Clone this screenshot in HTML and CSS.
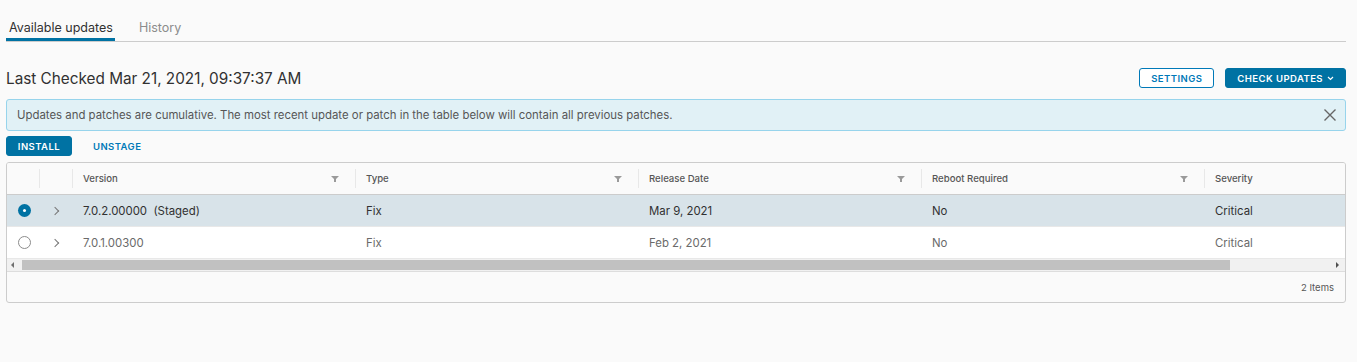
FILE: index.html
```html
<!DOCTYPE html>
<html lang="en">
<head>
    <meta charset="UTF-8">
    <meta name="viewport" content="width=device-width, initial-scale=1.0">
    <title>Updates</title>
    <link rel="stylesheet" href="styles.css">
</head>
<body>

<div class="tabs">
    <a class="tab active" href="#">Available updates</a>
    <a class="tab" href="#">History</a>
</div>

<div class="title-row">
    <h2>Last Checked Mar 21, 2021, 09:37:37 AM</h2>
    <div class="actions">
        <button class="btn btn-outline">SETTINGS</button>
        <button class="btn btn-primary">CHECK UPDATES
            <svg width="7" height="5" viewBox="0 0 7 5"><path d="M1 1l2.5 2.5L6 1" fill="none" stroke="#fff" stroke-width="1.2"/></svg>
        </button>
    </div>
</div>

<div class="alert">
    <span>Updates and patches are cumulative. The most recent update or patch in the table below will contain all previous patches.</span>
    <svg class="alert-close" width="14" height="14" viewBox="0 0 14 14"><path d="M1.5 1.5l11 11M12.5 1.5l-11 11" stroke="#666" stroke-width="1.4"/></svg>
</div>

<div class="toolbar">
    <button class="btn btn-primary">INSTALL</button>
    <button class="btn btn-link">UNSTAGE</button>
</div>

<div class="grid">
    <div class="grid-body">
        <div class="row head">
            <div class="cell c-sel"></div>
            <div class="cell c-exp"></div>
            <div class="cell c-col">Version <svg class="filter" width="8" height="6" viewBox="0 0 8 6"><path d="M0 0h8L5 3v3H3V3z" fill="#9a9a9a"/></svg></div>
            <div class="cell c-col">Type <svg class="filter" width="8" height="6" viewBox="0 0 8 6"><path d="M0 0h8L5 3v3H3V3z" fill="#9a9a9a"/></svg></div>
            <div class="cell c-col">Release Date <svg class="filter" width="8" height="6" viewBox="0 0 8 6"><path d="M0 0h8L5 3v3H3V3z" fill="#9a9a9a"/></svg></div>
            <div class="cell c-col">Reboot Required <svg class="filter" width="8" height="6" viewBox="0 0 8 6"><path d="M0 0h8L5 3v3H3V3z" fill="#9a9a9a"/></svg></div>
            <div class="cell c-last">Severity</div>
        </div>
        <div class="row selected">
            <div class="cell c-sel"><span class="radio on"></span></div>
            <div class="cell c-exp"><span class="caret"></span></div>
            <div class="cell c-col">7.0.2.00000&nbsp; (Staged)</div>
            <div class="cell c-col">Fix</div>
            <div class="cell c-col">Mar 9, 2021</div>
            <div class="cell c-col">No</div>
            <div class="cell c-last">Critical</div>
        </div>
        <div class="row">
            <div class="cell c-sel"><span class="radio"></span></div>
            <div class="cell c-exp"><span class="caret"></span></div>
            <div class="cell c-col">7.0.1.00300</div>
            <div class="cell c-col">Fix</div>
            <div class="cell c-col">Feb 2, 2021</div>
            <div class="cell c-col">No</div>
            <div class="cell c-last">Critical</div>
        </div>
    </div>
    <div class="hscroll">
        <span class="arrow left"></span>
        <div class="thumb"></div>
        <span class="arrow right"></span>
    </div>
    <div class="grid-footer">2 Items</div>
</div>

</body>
</html>
```

FILE: styles.css
```css
body {
    margin: 0;
    padding: 14px 11px 0 6px;
    background: #fafafa;
    font-family: Inter, "Noto Sans", sans-serif;
    color: #565656;
}
.tabs {
    display: flex;
    gap: 23px;
    border-bottom: 1px solid #ccc;
    height: 27px;
}
.tab {
    font-size: 12.5px;
    color: #8c8c8c;
    text-decoration: none;
    padding: 0 1px;
    line-height: 27px;
    box-sizing: border-box;
}
.tab.active {
    color: #313131;
    border-bottom: 3px solid #0072a3;
    padding: 0 2px 0 3px;
    height: 27px;
}
.title-row {
    display: flex;
    justify-content: space-between;
    align-items: center;
    margin-top: 26px;
}
.title-row h2 {
    margin: 0;
    font-weight: 400;
    font-size: 15.3px;
    color: #313131;
}
.actions {
    display: flex;
    gap: 11px;
}
.btn {
    font-family: inherit;
    font-size: 9.5px;
    font-weight: 600;
    letter-spacing: 0.45px;
    height: 20px;
    padding: 0 11px;
    border-radius: 3px;
    cursor: pointer;
    display: inline-flex;
    align-items: center;
    gap: 4px;
}
.btn-outline {
    background: #fff;
    border: 1px solid #0079b8;
    color: #0079b8;
    width: 75px;
    justify-content: center;
}
.btn-primary {
    background: #0072a3;
    border: 1px solid #0072a3;
    color: #fff;
}
.btn-link {
    background: none;
    border: none;
    color: #0079b8;
    padding: 0 10px;
}
.alert {
    margin-top: 11px;
    height: 32px;
    box-sizing: border-box;
    background: #e1f1f6;
    border: 1px solid #97d4ec;
    border-radius: 3px;
    display: flex;
    align-items: center;
    justify-content: space-between;
    padding: 0 8px 0 10px;
    font-size: 11.4px;
    color: #565656;
}
.alert-close {
    display: block;
}
.toolbar {
    display: flex;
    gap: 11px;
    margin-top: 5px;
}
.toolbar .btn-primary {
    width: 66px;
    justify-content: center;
}
.grid {
    margin-top: 6px;
    border: 1px solid #ccc;
    border-radius: 3px;
    background: #fafafa;
    overflow: hidden;
}
.grid-body {
    overflow: hidden;
}
.row {
    display: flex;
    height: 31px;
    align-items: center;
    background: #fff;
    border-bottom: 1px solid #e8e8e8;
    font-size: 11.4px;
    color: #6a6a6a;
    width: 1400px;
}
.row.head {
    background: #fafafa;
    border-bottom: 1px solid #ccc;
    font-size: 9.6px;
    font-weight: 500;
    color: #565656;
}
.row.selected {
    background: #d8e3e9;
    color: #313131;
}
.cell {
    box-sizing: border-box;
    height: 100%;
    display: flex;
    align-items: center;
    position: relative;
    padding-left: 11px;
}
.head .cell + .cell::before {
    content: "";
    position: absolute;
    left: 0;
    top: 6px;
    bottom: 6px;
    width: 1px;
    background: #e8e8e8;
}
.c-sel { width: 32px; padding-left: 11px; }
.c-exp { width: 33px; padding-left: 13px; }
.c-col { width: 283px; padding-right: 16px; }
.c-last { width: 200px; }
.filter {
    margin-left: auto;
    display: block;
}
.radio {
    width: 11px;
    height: 11px;
    border: 1px solid #8c8c8c;
    border-radius: 50%;
    background: #fff;
}
.radio.on {
    width: 13px;
    height: 13px;
    border: none;
    background: #0072a3;
    position: relative;
}
.radio.on::after {
    content: "";
    position: absolute;
    left: 5px;
    top: 5px;
    width: 3px;
    height: 3px;
    border-radius: 50%;
    background: #fff;
}
.caret {
    width: 5px;
    height: 5px;
    border-right: 1.3px solid #777;
    border-top: 1.3px solid #777;
    transform: rotate(45deg);
}
.hscroll {
    display: flex;
    align-items: center;
    height: 12px;
    background: #f1f1f1;
    border-bottom: 1px solid #ddd;
}
.arrow {
    width: 0;
    height: 0;
    border-top: 3px solid transparent;
    border-bottom: 3px solid transparent;
}
.arrow.left {
    border-right: 3px solid #6f6f6f;
    margin: 0 8px 0 4px;
}
.arrow.right {
    border-left: 3px solid #505050;
    margin: 0 6px 0 auto;
}
.thumb {
    width: 1208px;
    height: 10px;
    background: #c1c1c1;
}
.grid-footer {
    height: 30px;
    display: flex;
    align-items: center;
    justify-content: flex-end;
    padding-right: 11px;
    font-size: 9.5px;
    color: #565656;
}
```
